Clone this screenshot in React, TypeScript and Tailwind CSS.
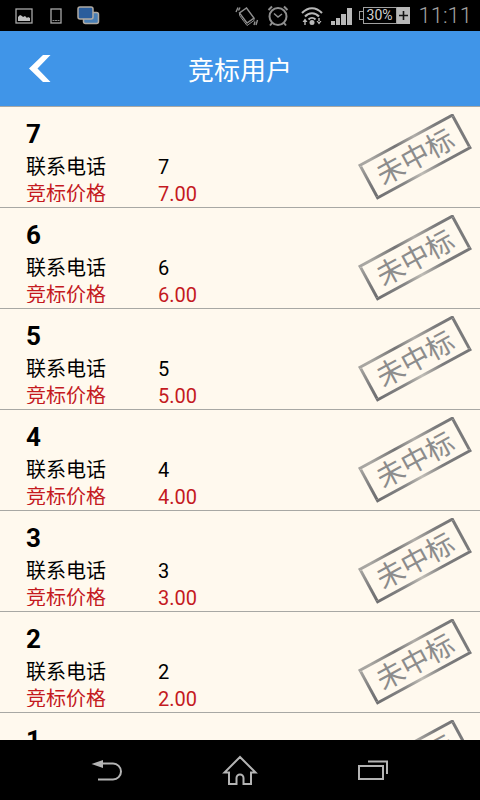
import { useState } from "react";

type Bid = {
  id: number;
  name: string;
  phone: string;
  price: string;
};

const BIDS: Bid[] = [7, 6, 5, 4, 3, 2, 1].map((n) => ({
  id: n,
  name: String(n),
  phone: String(n),
  price: n.toFixed(2),
}));

function StatusBar() {
  return (
    <div className="flex h-[31px] shrink-0 items-center justify-between bg-black pl-[15px] pr-2 text-[#a0a0a0]">
      <div className="flex items-center gap-4">
        <svg width="18" height="16" viewBox="0 0 18 16">
          <rect x="1" y="1" width="16" height="14" fill="none" stroke="#a8a8a8" strokeWidth="1.3" />
          <path d="M3 13V9l2-2 2 1 1 1 2-1 2 2 1-1 2 1v3z" fill="#c0c0c0" />
        </svg>
        <svg width="14" height="16" viewBox="0 0 14 16">
          <rect x="2" y="1" width="10" height="14" fill="none" stroke="#a8a8a8" strokeWidth="1.3" />
          <path d="M3.500 12.500h2M6 12.500h2M8.500 12.500h2" stroke="#888" />
        </svg>
        <svg width="23" height="19" viewBox="0 0 23 19" className="-ml-[2px]">
          <rect x="6.5" y="6.5" width="15" height="11" rx="2" fill="#4a7fb5" stroke="#b0aaa2" strokeWidth="1.5" />
          <rect x="1" y="1" width="15" height="12" rx="2" fill="#2a5d9c" stroke="#b0aaa2" strokeWidth="1.5" />
        </svg>
      </div>
      <div className="flex items-center">
        <svg width="24" height="22" viewBox="0 0 24 22" fill="none" stroke="#8f8f8f" strokeWidth="1.4">
          <path d="M11.500 3L19 13l-7 5-7.500-10z" />
          <path d="M4.500 8v2.500L12 20.500l7-5V13" strokeWidth="1" />
          <path d="M1 7l2-4.500M3.500 5.500l1.500-3M22.500 15l-1.500 5M20 16.500L19 20" />
        </svg>
        <svg width="22" height="22" viewBox="0 0 22 22" fill="none" stroke="#8f8f8f" strokeWidth="2" className="ml-2">
          <circle cx="11" cy="11.500" r="8.500" />
          <path d="M1.500 5L5 1.500M17 1.500L20.500 5M5 18l-2 2.500M17 18l2 2.500" />
          <path d="M7 8.500l4 3.500 4-3" strokeWidth="1.500" />
        </svg>
        <svg width="22" height="20" viewBox="0 0 22 20" fill="none" stroke="#b8b8b8" strokeWidth="2" className="ml-3">
          <path d="M1 7c6-6.500 14-6.500 20 0M4 10.500c4-4.500 10-4.500 14 0M7.500 13.500c2-2 5-2 7 0" />
          <circle cx="11" cy="16.500" r="2.500" fill="#b8b8b8" stroke="none" />
          <path d="M1.500 16L4 12.500 6.500 16zM3.300 15h1.400v4H3.300zM15.500 15L18 18.500 20.500 15zM17.300 12h1.400v4h-1.400z" fill="#b8b8b8" stroke="none" />
        </svg>
        <svg width="22" height="18" viewBox="0 0 22 18" fill="#b8b8b8" className="ml-2">
          <path d="M0 14h4v4H0zM5 11h4v7H5zM10 7h5v11h-5zM16 1h5v17h-5z" />
        </svg>
        <div className="ml-[6px] flex h-[17px] items-center">
          <span className="h-[9px] w-[4px] border border-r-0 border-[#a0a0a0]" />
          <span className="flex h-[17px] w-[34px] items-center justify-center border border-[#a0a0a0] font-['Roboto',sans-serif] text-[14px] text-[#d0d0d0]">
            30%
          </span>
          <span className="flex h-[17px] w-[13px] items-center justify-center bg-[#b8b8b8]">
            <svg width="9" height="9" viewBox="0 0 9 9" stroke="#111" strokeWidth="1.6">
              <path d="M4.500 0v9M0 4.500h9" />
            </svg>
          </span>
        </div>
        <span className="ml-[9px] font-['Roboto',sans-serif] text-[22px] font-light leading-7">11:11</span>
      </div>
    </div>
  );
}

function Header() {
  return (
    <header className="grid h-[76px] shrink-0 grid-cols-[80px_1fr_80px] items-center border-b border-[#a8a8a4] bg-[#4095e8]">
      <button type="button" aria-label="返回" className="flex h-full items-center pl-[29px]">
        <svg width="22" height="27" viewBox="0 0 22 27" fill="#fff">
          <path d="M14 0h7.500L8.500 13.500 21.500 27H14L0 13.500z" />
        </svg>
      </button>
      <h1 className="pt-1 text-center text-[26px] leading-8 text-white">竞标用户</h1>
    </header>
  );
}

function Stamp() {
  return (
    <svg width="116" height="88" viewBox="0 0 116 88" className="shrink-0">
      <defs>
        <linearGradient id="ink" x1="0" y1="0" x2="1" y2="0">
          <stop offset="0" stopColor="#a5a39f" />
          <stop offset="0.12" stopColor="#aaa8a3" />
          <stop offset="0.38" stopColor="#747475" />
          <stop offset="0.58" stopColor="#b0ada8" />
          <stop offset="0.8" stopColor="#7b7b7c" />
          <stop offset="1" stopColor="#777778" />
        </linearGradient>
        <linearGradient id="inkBottom" x1="0" y1="0" x2="1" y2="0">
          <stop offset="0" stopColor="#6e6e70" />
          <stop offset="0.3" stopColor="#858585" />
          <stop offset="0.48" stopColor="#c0bdb6" />
          <stop offset="0.7" stopColor="#7b7b7c" />
          <stop offset="1" stopColor="#777778" />
        </linearGradient>
        <linearGradient id="inkSide" x1="0" y1="0" x2="0" y2="1">
          <stop offset="0" stopColor="#a5a39f" />
          <stop offset="0.6" stopColor="#7a7a7b" />
          <stop offset="1" stopColor="#6e6e70" />
        </linearGradient>
      </defs>
      <g transform="rotate(-28.5 58 42.5)">
        <path d="M4 22.500h108v3H4z" fill="url(#ink)" />
        <path d="M4 59.500h108v3H4z" fill="url(#inkBottom)" />
        <path d="M4 25.500h3v34H4z" fill="url(#inkSide)" />
        <path d="M109 25.500h3v34h-3z" fill="#7a7a7b" />
        <text
          x="58"
          y="53"
          textAnchor="middle"
          fontSize="28"
          fill="#8c8c8c"
          className="font-['Noto_Sans_CJK_SC',sans-serif]"
        >
          未中标
        </text>
      </g>
    </svg>
  );
}

function BidRow({ bid, selected, onSelect }: { bid: Bid; selected: boolean; onSelect: (id: number) => void }) {
  return (
    <li
      aria-current={selected}
      onClick={() => onSelect(bid.id)}
      className="flex h-[101px] justify-between border-b border-[#a8a8a4] pl-[26px] pr-[7px] pt-[7px]"
    >
      <div className="h-[88px] overflow-hidden">
        <h2 className="text-[26px] font-bold leading-[40px]">{bid.name}</h2>
        <dl className="grid grid-cols-[132px_auto] text-[20px] leading-[27px]">
          <dt>联系电话</dt>
          <dd>{bid.phone}</dd>
          <dt className="text-[#c41a1f]">竞标价格</dt>
          <dd className="text-[#c41a1f]">{bid.price}</dd>
        </dl>
      </div>
      <Stamp />
    </li>
  );
}

function NavBar() {
  return (
    <nav className="flex h-[60px] shrink-0 items-center justify-center gap-[93px] bg-black">
      <button type="button" aria-label="后退">
        <svg width="40" height="32" viewBox="0 0 40 32" fill="none" stroke="#b4b4b4" strokeWidth="2">
          <path d="M16 9.500h10a8 8 0 0 1 0 16H11" />
          <path d="M4.500 10L16 6v8z" fill="#b4b4b4" stroke="none" />
        </svg>
      </button>
      <button type="button" aria-label="主页">
        <svg width="40" height="32" viewBox="0 0 40 32" fill="none" stroke="#b4b4b4" strokeWidth="2">
          <path d="M20 3L4.500 18.500H9V30h7.500v-6a3.500 3.500 0 0 1 7 0v6H31V18.500h4.500z" />
        </svg>
      </button>
      <button type="button" aria-label="最近">
        <svg width="40" height="32" viewBox="0 0 40 32" fill="none" stroke="#b4b4b4" strokeWidth="2">
          <path d="M6 12h24v13H6zM15 7.500h19V20" />
        </svg>
      </button>
    </nav>
  );
}

export default function App() {
  const [selectedId, setSelectedId] = useState<number | null>(null);

  return (
    <div className="flex h-screen flex-col bg-[#fff9ee] font-['Roboto','Noto_Sans_CJK_SC',sans-serif] text-black">
      <StatusBar />
      <Header />
      <ul className="min-h-0 flex-1 overflow-y-auto [scrollbar-width:none]">
        {BIDS.map((bid) => (
          <BidRow key={bid.id} bid={bid} selected={bid.id === selectedId} onSelect={setSelectedId} />
        ))}
      </ul>
      <NavBar />
    </div>
  );
}
